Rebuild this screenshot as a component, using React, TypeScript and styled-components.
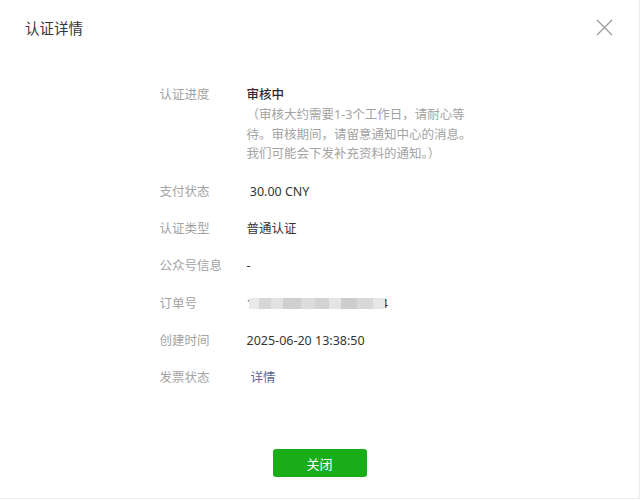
import React from "react";
import styled, { createGlobalStyle } from "styled-components";

const Global = createGlobalStyle`
  html, body { margin: 0; padding: 0; background: #ffffff; }
  body { font-family: "Noto Sans", "Noto Sans CJK SC", sans-serif; }
`;

const Dialog = styled.div`
  box-sizing: border-box;
  width: 640px;
  height: 499px;
  background: #fff;
  border-right: 1px solid #ededed;
  border-bottom: 1px solid #ededed;
  display: flex;
  flex-direction: column;
`;

const Header = styled.div`
  height: 56px;
  display: flex;
  align-items: center;
  justify-content: space-between;
  padding: 0 26px 0 25px;
`;

const Title = styled.h1`
  margin: 0;
  font-size: 14.5px;
  font-weight: 400;
  color: #353535;
  line-height: 20px;
`;

const CloseButton = styled.button`
  border: 0;
  background: none;
  padding: 0;
  width: 18px;
  height: 18px;
  display: flex;
  align-items: center;
  justify-content: center;
  cursor: pointer;
  margin-top: -2px;
`;

const Body = styled.div`
  flex: 1;
  padding-top: 29px;
  display: flex;
  justify-content: center;
`;

const List = styled.dl`
  margin: 0;
  width: 320px;
  display: flex;
  flex-direction: column;
  gap: 17.4px;
`;

const Row = styled.div`
  display: flex;
  align-items: flex-start;
  font-size: 12.5px;
  line-height: 20px;
`;

const Label = styled.dt`
  width: 87px;
  flex: none;
  color: #a3a3a3;
`;

const Value = styled.dd<{ $bold?: boolean }>`
  margin: 0;
  flex: 1;
  color: #353535;
  white-space: pre;
  font-weight: ${(p) => (p.$bold ? 500 : 400)};
  display: flex;
  flex-direction: column;
`;

const Status = styled.span`
  font-weight: 500;
  color: #2b2b2b;
`;

const Note = styled.span`
  color: #a3a3a3;
  line-height: 19.7px;
`;

const Link = styled.a`
  color: #576b95;
  text-decoration: none;
  margin-left: 4px;
  cursor: pointer;
`;

const OrderNo = styled.span`
  display: flex;
  align-items: center;
`;

const Mosaic = styled.span`
  display: inline-block;
  width: 136px;
  height: 11px;
  margin: 0 -4px 0 -5px;
  position: relative;
  z-index: 1;
  background: linear-gradient(
    90deg,
    #e9e9e9 0 10px,
    #d6d6d6 10px 22px,
    #e2e2e2 22px 34px,
    #cfcfcf 34px 52px,
    #dcdcdc 52px 66px,
    #d3d3d3 66px 80px,
    #e4e4e4 80px 92px,
    #cdcdcd 92px 108px,
    #d8d8d8 108px 124px,
    #e6e6e6 124px 136px
  );
`;

const Footer = styled.div`
  display: flex;
  justify-content: center;
  padding-bottom: 21px;
`;

const PrimaryButton = styled.button`
  width: 94px;
  height: 28px;
  border: 0;
  border-radius: 3px;
  background: #1aad19;
  color: #fff;
  font-family: "Noto Sans", "Noto Sans CJK SC", sans-serif;
  font-size: 13px;
  cursor: pointer;
`;

const CloseIcon = () => (
  <svg width="17" height="17" viewBox="0 0 17 17" fill="none">
    <path d="M1 1L16 16M16 1L1 16" stroke="#9a9a9a" strokeWidth="1.3" />
  </svg>
);

export default function App() {
  return (
    <>
      <Global />
      <Dialog>
        <Header>
          <Title>认证详情</Title>
          <CloseButton aria-label="关闭">
            <CloseIcon />
          </CloseButton>
        </Header>
        <Body>
          <List>
            <Row>
              <Label>认证进度</Label>
              <Value>
                <Status>审核中</Status>
                <Note>（审核大约需要1-3个工作日，请耐心等</Note>
                <Note>待。审核期间，请留意通知中心的消息。</Note>
                <Note>我们可能会下发补充资料的通知。）</Note>
              </Value>
            </Row>
            <Row>
              <Label>支付状态</Label>
              <Value> 30.00 CNY</Value>
            </Row>
            <Row>
              <Label>认证类型</Label>
              <Value>普通认证</Value>
            </Row>
            <Row>
              <Label>公众号信息</Label>
              <Value>-</Value>
            </Row>
            <Row>
              <Label>订单号</Label>
              <Value>
                <OrderNo>
                  1<Mosaic />4
                </OrderNo>
              </Value>
            </Row>
            <Row>
              <Label>创建时间</Label>
              <Value>2025-06-20 13:38:50</Value>
            </Row>
            <Row>
              <Label>发票状态</Label>
              <Value>
                <span>
                  <Link>详情</Link>
                </span>
              </Value>
            </Row>
          </List>
        </Body>
        <Footer>
          <PrimaryButton>关闭</PrimaryButton>
        </Footer>
      </Dialog>
    </>
  );
}
